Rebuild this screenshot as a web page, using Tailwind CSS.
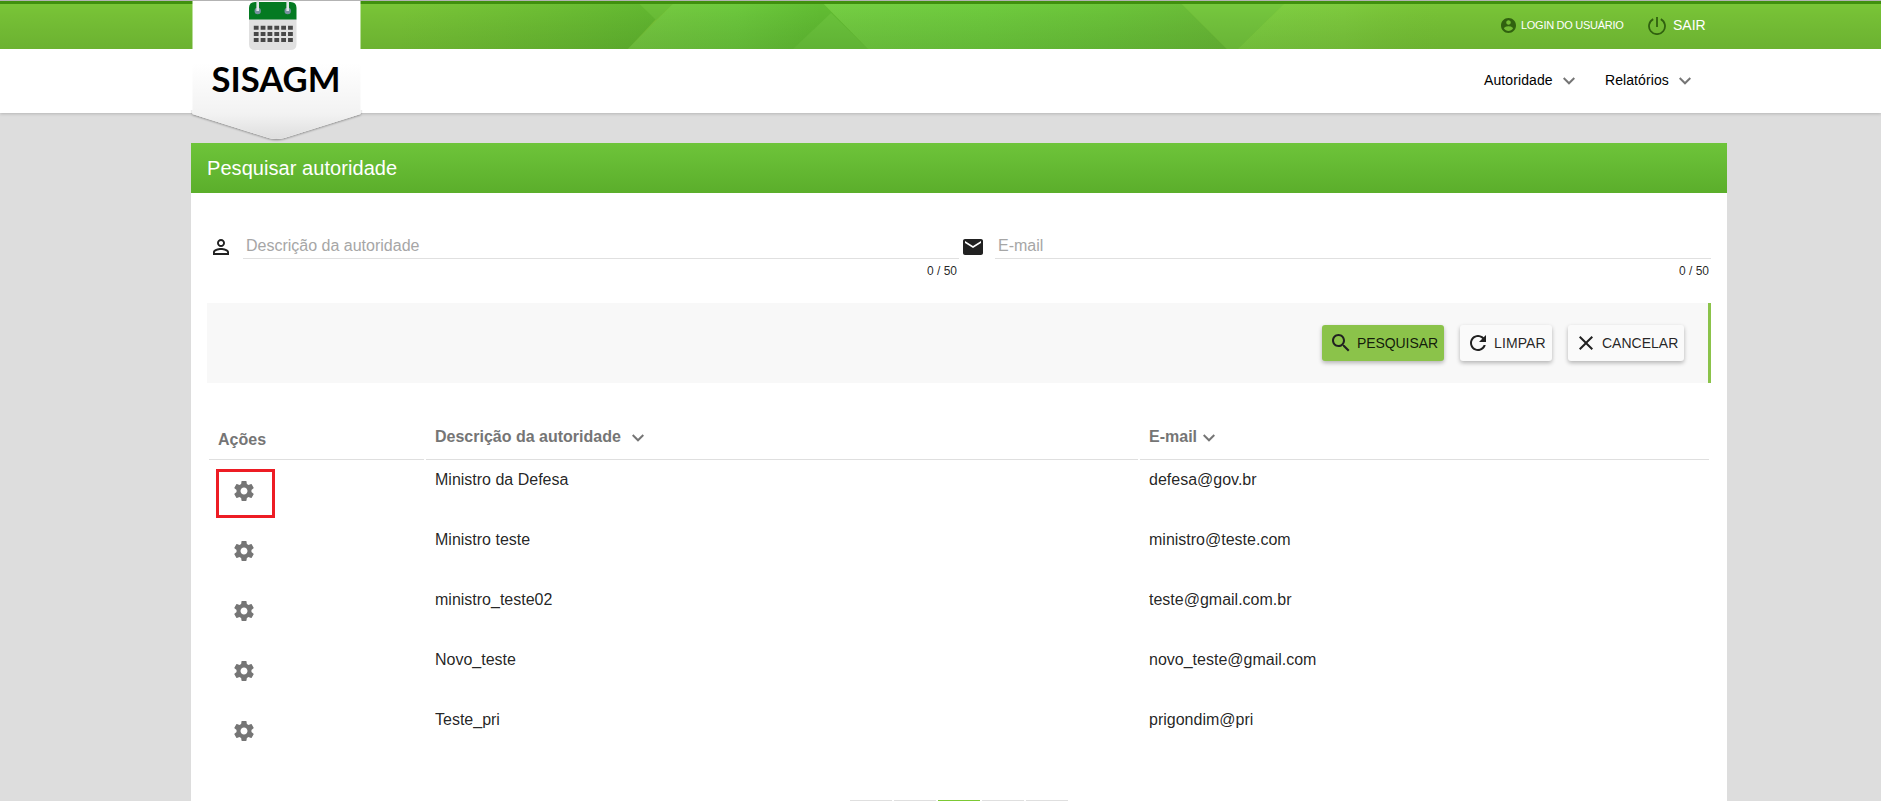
<!DOCTYPE html>
<html lang="pt-BR">
<head>
<meta charset="utf-8">
<title>SISAGM</title>
<script src="https://cdn.jsdelivr.net/npm/@tailwindcss/browser@4"></script>
</head>
<body class="bg-[#dddddd] font-['Liberation_Sans',Arial,sans-serif] text-black/87 h-[801px] overflow-hidden">
<svg class="hidden">
  <symbol id="gear" viewBox="0 0 24 24"><path d="M19.43 12.98c.04-.32.07-.64.07-.98s-.03-.66-.07-.98l2.11-1.65c.19-.15.24-.42.12-.64l-2-3.46c-.12-.22-.39-.3-.61-.22l-2.49 1c-.52-.4-1.08-.73-1.69-.98l-.38-2.65C14.46 2.18 14.25 2 14 2h-4c-.25 0-.46.18-.49.42l-.38 2.65c-.61.25-1.17.59-1.69.98l-2.49-1c-.23-.09-.49 0-.61.22l-2 3.46c-.13.22-.07.49.12.64l2.11 1.65c-.04.32-.07.65-.07.98s.03.66.07.98l-2.11 1.65c-.19.15-.24.42-.12.64l2 3.46c.12.22.39.3.61.22l2.49-1c.52.4 1.08.73 1.69.98l.38 2.65c.03.24.24.42.49.42h4c.25 0 .46-.18.49-.42l.38-2.65c.61-.25 1.17-.59 1.69-.98l2.49 1c.23.09.49 0 .61-.22l2-3.46c.12-.22.07-.49-.12-.64l-2.110-1.650zM12 15.500c-1.930 0-3.500-1.570-3.500-3.500s1.570-3.500 3.500-3.500 3.500 1.570 3.500 3.500-1.570 3.500-3.500 3.500z"/></symbol>
  <symbol id="chev" viewBox="0 0 12 8"><path d="M.7 1 6 6.300 11.300 1" fill="none" stroke="currentColor" stroke-width="1.950"/></symbol>
</svg>

<div class="relative">
  <div class="h-px bg-[#b3b3b3]"></div>
  <div class="h-[3px] bg-[#40900e]"></div>
  <div class="relative h-[45px] bg-[#79c537]">
    <svg class="absolute left-0 top-0" width="1881" height="45" viewBox="0 4 1881 45">
      <defs>
        <linearGradient id="g0" x1="0" x2="1"><stop offset="0" stop-color="#68bd33" stop-opacity="0"/><stop offset="1" stop-color="#62b830"/></linearGradient>
        <linearGradient id="g1" x1="0" x2="1"><stop offset="0" stop-color="#78cb42"/><stop offset=".45" stop-color="#6dc93d"/><stop offset=".8" stop-color="#62be33"/><stop offset="1" stop-color="#62be33"/></linearGradient>
        <linearGradient id="g2" x1="0" x2="1"><stop offset="0" stop-color="#75cf43"/><stop offset=".4" stop-color="#6fcc3e"/><stop offset=".7" stop-color="#6cc53a"/><stop offset="1" stop-color="#6abb37"/></linearGradient>
        <linearGradient id="g3" x1="0" x2="1"><stop offset="0" stop-color="#7fd042"/><stop offset=".5" stop-color="#7ecb3e"/><stop offset="1" stop-color="#79c537" stop-opacity="0"/></linearGradient>
        <linearGradient id="sh" x1="0" x2="0" y1="0" y2="1"><stop offset="0" stop-color="#000" stop-opacity="0"/><stop offset="1" stop-color="#0a2800" stop-opacity=".12"/></linearGradient>
      </defs>
      <path d="M400 4H640L656 19 628 49H400z" fill="url(#g0)"/>
      <path d="M640 4H673L656 20z" fill="#6cc138"/>
      <path d="M673 4H824L868 49H628z" fill="url(#g1)"/>
      <path d="M831 13 793 49H868z" fill="#6cc63c"/>
      <path d="M824 4H1182L1227 49H868z" fill="url(#g2)"/>
      <path d="M1182 4H1284L1238 49H1227z" fill="#76c83e"/>
      <path d="M1284 4H1450V49H1238z" fill="url(#g3)"/>
      <path d="M0 4H1881V49H0z" fill="url(#sh)"/>
    </svg>
    <div class="relative ml-[1501px] flex h-[43px] items-center text-white">
      <svg class="size-[15px] text-[#30610f]" viewBox="2 2 20 20" fill="currentColor"><path d="M12 2C6.480 2 2 6.480 2 12s4.480 10 10 10 10-4.480 10-10S17.520 2 12 2zm0 3c1.660 0 3 1.340 3 3s-1.340 3-3 3-3-1.340-3-3 1.340-3 3-3zm0 14.200c-2.500 0-4.710-1.280-6-3.220.03-1.990 4-3.080 6-3.080 1.990 0 5.970 1.090 6 3.080-1.290 1.940-3.500 3.220-6 3.220z"/></svg>
      <span class="ml-[5px] w-[127px] whitespace-nowrap text-[11px] tracking-[-0.28px]">LOGIN DO USUÁRIO</span>
      <svg class="size-[18px] text-[#30610f]" viewBox="0 0 18 18" fill="none" stroke="currentColor" stroke-width="1.800"><path d="M9 0v10M5.200 2.100a8 8 0 1 0 7.600 0"/></svg>
      <span class="ml-[7px] pb-px text-sm">SAIR</span>
    </div>
  </div>
  <div class="flex h-16 items-center bg-white pl-[1484px] text-sm text-black shadow-[0_1px_3px_rgba(0,0,0,0.18)]">
    <span class="w-[79px] pb-0.5 tracking-[0.1px]">Autoridade</span><svg class="w-3 h-2 text-[#757575]"><use href="#chev"/></svg>
    <span class="ml-[30px] w-[74px] pb-0.5 tracking-[0.08px]">Relatórios</span><svg class="w-3 h-2 text-[#757575]"><use href="#chev"/></svg>
  </div>

  <svg class="absolute left-[188px] top-px" width="180" height="144" viewBox="188 1 180 144">
    <defs>
      <linearGradient id="lg" x1="0" x2="0" y1="0" y2="1"><stop offset="0" stop-color="#fff"/><stop offset=".45" stop-color="#fff"/><stop offset=".82" stop-color="#f2f2f2"/><stop offset="1" stop-color="#dedede"/></linearGradient>
      <filter id="ds" x="-5%" y="-5%" width="110%" height="112%"><feDropShadow dx="0" dy="1" stdDeviation=".8" flood-color="#000" flood-opacity=".4"/></filter>
      <clipPath id="cb"><path d="M188 110H368V145H188z"/></clipPath>
    </defs>
    <path d="M192.500 1H360.500V114L284 138Q276 140 269 138L192.500 114z" fill="#fff" filter="url(#ds)" clip-path="url(#cb)"/>
    <path d="M192.500 1H360.500V114L284 138Q276 140 269 138L192.500 114z" fill="url(#lg)"/>
    <path d="M249 19H296.500V44Q296.500 50 290.500 50H255Q249 50 249 44z" fill="#e0e0e0"/>
    <path d="M249 19.500V8Q249 2 255 2H290.500Q296.500 2 296.500 8V19.500z" fill="#047a22"/>
    <g fill="#7890a0"><circle cx="257.700" cy="11" r="3.200"/><circle cx="287.700" cy="11" r="3.200"/></g>
    <path d="M257.700 1V11M287.700 1V11" stroke="#dfe6e6" stroke-width="2.600"/>
    <path d="M253.800 27.800H293M253.800 34H293M253.800 40H293" stroke="#484848" stroke-width="4" stroke-dasharray="4.800 2.050"/>
    <text x="211.500" y="91.800" font-family="Lato" font-weight="700" font-size="34.500" textLength="129" lengthAdjust="spacingAndGlyphs" fill="#000">SISAGM</text>
  </svg>
</div>

<main class="ml-[191px] mt-[30px] h-[658px] w-[1536px] bg-white">
  <h1 class="flex h-[50px] items-center bg-linear-to-b from-[#6ec43a] to-[#5bae2b] pl-4 text-xl tracking-[0.06px] text-white">Pesquisar autoridade</h1>
  <div class="px-4">
    <div class="flex h-[110px] pt-[42px]">
      <div class="flex w-[752px] pl-0.5">
        <svg class="size-6" viewBox="0 0 24 24" fill="#212121"><path d="M12 5.900c1.160 0 2.100.94 2.100 2.100s-.94 2.100-2.100 2.100S9.900 9.160 9.900 8s.94-2.100 2.100-2.100m0 9c2.970 0 6.100 1.460 6.100 2.100v1.100H5.900V17c0-.64 3.130-2.100 6.100-2.100M12 4C9.790 4 8 5.790 8 8s1.790 4 4 4 4-1.790 4-4-1.790-4-4-4zm0 9c-2.670 0-8 1.340-8 4v3h16v-3c0-2.660-5.330-4-8-4z"/></svg>
        <div class="ml-2.5 w-[716px]">
          <div class="flex h-6 items-center border-b border-[#e0e0e0] pb-0.5 pl-[3px] text-base text-[#a6a6a6]">Descrição da autoridade</div>
          <div class="pr-0.5 pt-1 text-right text-xs leading-4">0 / 50</div>
        </div>
      </div>
      <div class="flex w-[752px] pl-0.5">
        <svg class="size-6" viewBox="0 0 24 24" fill="#212121"><path d="M20 4H4c-1.100 0-1.990.9-1.990 2L2 18c0 1.100.9 2 2 2h16c1.100 0 2-.9 2-2V6c0-1.100-.9-2-2-2zm0 4l-8 5-8-5V6l8 5 8-5v2z"/></svg>
        <div class="ml-2.5 w-[716px]">
          <div class="flex h-6 items-center border-b border-[#e0e0e0] pb-0.5 pl-[3px] text-base text-[#a6a6a6]">E-mail</div>
          <div class="pr-0.5 pt-1 text-right text-xs leading-4">0 / 50</div>
        </div>
      </div>
    </div>

    <div class="flex h-20 justify-end gap-4 border-r-3 border-[#8bc34a] bg-[#f8f8f8] pr-6 pt-[22px] text-sm">
      <button class="flex h-9 w-[122px] items-center rounded-[3px] bg-[#8bc34a] pl-[7px] shadow-[0_2px_4px_rgba(0,0,0,0.28)]"><svg class="mr-1 size-6" viewBox="0 0 24 24" fill="#212121"><path d="M15.500 14h-.79l-.28-.27C15.410 12.590 16 11.110 16 9.500 16 5.910 13.090 3 9.500 3S3 5.910 3 9.500 5.910 16 9.500 16c1.610 0 3.090-.59 4.230-1.570l.27.28v.79l5 4.990L20.490 19l-4.990-5zm-6 0C7.010 14 5 11.990 5 9.500S7.010 5 9.500 5 14 7.010 14 9.500 11.990 14 9.500 14z"/></svg><span class="tracking-[-0.08px]">PESQUISAR</span></button>
      <button class="flex h-9 w-[92px] items-center rounded-[3px] bg-[#fafafa] pl-1.5 shadow-[0_2px_4px_rgba(0,0,0,0.28)]"><svg class="mr-1 size-6" viewBox="0 0 24 24" fill="#212121"><path d="M17.650 6.350C16.200 4.900 14.210 4 12 4c-4.420 0-7.990 3.580-7.990 8s3.570 8 7.990 8c3.730 0 6.840-2.550 7.730-6h-2.080c-.82 2.330-3.040 4-5.650 4-3.310 0-6-2.690-6-6s2.690-6 6-6c1.660 0 3.140.69 4.220 1.780L13 11h7V4l-2.350 2.350z"/></svg><span class="tracking-[0.1px]">LIMPAR</span></button>
      <button class="flex h-9 w-[116px] items-center rounded-[3px] bg-[#fafafa] pl-1.5 shadow-[0_2px_4px_rgba(0,0,0,0.28)]"><svg class="mr-1 size-6" viewBox="0 0 24 24" fill="#212121"><path d="M19 6.410L17.590 5 12 10.590 6.410 5 5 6.410 10.590 12 5 17.590 6.410 19 12 13.410 17.590 19 19 17.590 13.410 12z"/></svg>CANCELAR</button>
    </div>

    <div class="mt-[35px] grid w-[1502px] grid-cols-[215px_712px_569px] gap-x-0.5 pl-0.5 text-base font-bold text-[#757575]">
      <div class="flex h-[42px] items-center border-b border-[#dfdfdf] pl-[9px] pt-[3px]">Ações</div>
      <div class="flex h-[42px] items-center border-b border-[#dfdfdf] pb-[3px] pl-[9px]">Descrição da autoridade<svg class="ml-[11px] mt-px h-2 w-3"><use href="#chev"/></svg></div>
      <div class="flex h-[42px] items-center border-b border-[#dfdfdf] pb-[3px] pl-[9px]">E-mail<svg class="ml-1.5 mt-px h-2 w-3"><use href="#chev"/></svg></div>
    </div>
    <div class="relative pl-0.5">
      <div class="absolute left-[9px] top-[9px] h-[49px] w-[59px] border-3 border-[#ed1c24]"></div>
      <div class="grid h-[60px] grid-cols-[215px_712px_569px] gap-x-0.5"><svg class="ml-[23px] mt-[19px] size-6" fill="#757575"><use href="#gear"/></svg><span class="pl-[9px] pt-2">Ministro da Defesa</span><span class="pl-[9px] pt-2">defesa@gov.br</span></div>
      <div class="grid h-[60px] grid-cols-[215px_712px_569px] gap-x-0.5"><svg class="ml-[23px] mt-[19px] size-6" fill="#757575"><use href="#gear"/></svg><span class="pl-[9px] pt-2">Ministro teste</span><span class="pl-[9px] pt-2">ministro@teste.com</span></div>
      <div class="grid h-[60px] grid-cols-[215px_712px_569px] gap-x-0.5"><svg class="ml-[23px] mt-[19px] size-6" fill="#757575"><use href="#gear"/></svg><span class="pl-[9px] pt-2">ministro_teste02</span><span class="pl-[9px] pt-2">teste@gmail.com.br</span></div>
      <div class="grid h-[60px] grid-cols-[215px_712px_569px] gap-x-0.5"><svg class="ml-[23px] mt-[19px] size-6" fill="#757575"><use href="#gear"/></svg><span class="pl-[9px] pt-2">Novo_teste</span><span class="pl-[9px] pt-2">novo_teste@gmail.com</span></div>
      <div class="grid h-[60px] grid-cols-[215px_712px_569px] gap-x-0.5"><svg class="ml-[23px] mt-[19px] size-6" fill="#757575"><use href="#gear"/></svg><span class="pl-[9px] pt-2">Teste_pri</span><span class="pl-[9px] pt-2">prigondim@pri</span></div>
    </div>
    <div class="ml-[643px] mt-10 flex gap-0.5">
      <div class="h-px w-[42px] bg-[#dfdfdf]"></div><div class="h-px w-[42px] bg-[#dfdfdf]"></div><div class="h-px w-[42px] bg-[#7cc934]"></div><div class="h-px w-[42px] bg-[#dfdfdf]"></div><div class="h-px w-[42px] bg-[#dfdfdf]"></div>
    </div>
  </div>
</main>
</body>
</html>
